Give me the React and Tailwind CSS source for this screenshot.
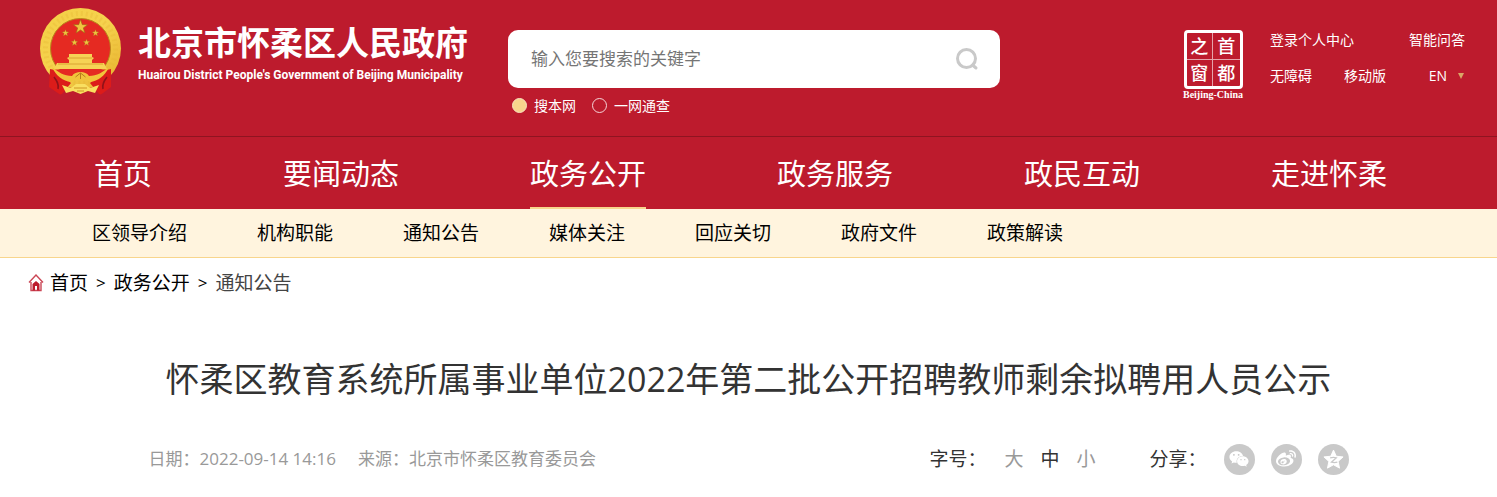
import React from 'react';
import { FaWeibo, FaWeixin } from 'react-icons/fa';

const NAV = ['首页', '要闻动态', '政务公开', '政务服务', '政民互动', '走进怀柔'];
const SUBNAV = ['区领导介绍', '机构职能', '通知公告', '媒体关注', '回应关切', '政府文件', '政策解读'];
const STAR = 'M0-10 2.4-3.2 9.5-3.1 3.8 1.2 5.9 8.1 0 4 -5.9 8.1 -3.8 1.2 -9.5-3.1 -2.4-3.2Z';

function Emblem() {
  return (
    <svg viewBox="0 0 82 88" className="h-[88px] w-[82px] shrink-0" aria-hidden="true">
      <defs>
        <linearGradient id="gold" x1="0" y1="0" x2="1" y2="1">
          <stop offset="0" stopColor="#f3cf45" />
          <stop offset="0.5" stopColor="#f6d24e" />
          <stop offset="1" stopColor="#e5ae2b" />
        </linearGradient>
      </defs>
      <circle cx="40.500" cy="40.500" r="40.500" fill="url(#gold)" />
      <circle cx="40.500" cy="40.500" r="35" fill="none" stroke="#e3b433" strokeWidth="5" strokeDasharray="2 3" opacity="0.3" />
      <circle cx="40.500" cy="40.500" r="30" fill="#e52a22" stroke="#b98a1b" strokeWidth="1" />
      <g fill="#f0c540" stroke="#9a6b13" strokeWidth="0.8">
        <path d={STAR} transform="translate(40.5 19) scale(.74)" />
        <path d={STAR} transform="translate(25.5 25) scale(.36)" />
        <path d={STAR} transform="translate(55.5 25) scale(.36)" />
        <path d={STAR} transform="translate(34.5 34.500) scale(.36)" />
        <path d={STAR} transform="translate(46.5 34.500) scale(.36)" />
      </g>
      <path d="M29 46h23v3l2 1-2 2v3h12l3 6H14l3-6h12v-3l-2-2 2-1z" fill="#f6d355" />
      <path d="M29 50h23M18 56h45" stroke="#d49b28" strokeWidth="0.8" />
      <path d="M15 61.500h51l-8 8H23z" fill="#e52a22" />
      <path d="M10 61l5 1 16 13-9 11-2 .5L9 79zM71 61l-5 1-16 13 9 11 2 .5L71 79z" fill="#dc1c1a" />
      <path d="M14 69c3 4 5 7 4 12M67 69c-3 4-5 7-4 12" stroke="#8f1219" strokeWidth="1.500" fill="none" />
      <path d="M12 59c6 5 12 9 20 9 2-3 5-4 8.500-4s6.500 1 8.500 4c8 0 14-4 20-9-4 9-11 14-19 15l-5-3-4.500 2-4.500-2-5 3c-8-1-15-6-19-15z" fill="#f1c43b" />
      <path d="M40.500 65l-5 4M40.500 65v6M40.500 65l5 4" stroke="#b77d1b" strokeWidth="1" />
      <path d="M22 77l9 3 5-4h9l5 4 9-3-4 8-7-2-7.500 3-7.500-3-7 2z" fill="#f9df60" />
      <path d="M34 80h13M37 83h7" stroke="#cf9425" strokeWidth="1" />
    </svg>
  );
}

function Seal() {
  return (
    <a href="#capital" className="flex w-[66px] shrink-0 flex-col items-center text-white">
      <span className="grid size-[59px] grid-cols-2 grid-rows-2 rounded-[4px] border-[3px] border-white text-center font-['Noto_Sans_CJK_SC',sans-serif] text-[18px] font-medium leading-[25px]">
        <span className="border-b border-r border-white/60">之</span>
        <span className="border-b border-white/60">首</span>
        <span className="border-r border-white/60">窗</span>
        <span>都</span>
      </span>
      <span className="whitespace-nowrap font-['Liberation_Serif',serif] text-[10px] font-bold leading-3">Beijing-China</span>
    </a>
  );
}

function QzoneIcon() {
  return (
    <svg viewBox="0 0 24 24" className="size-[23px]" aria-hidden="true">
      <path d="M12 2.200 14.900 8.600 22 9.300 16.800 14 18.300 21 12 17.500 5.700 21 7.200 14 2 9.300 9.100 8.600Z" fill="#fff" stroke="#fff" strokeLinejoin="round" />
      <path d="M8.500 10.200c2.500-.6 4.800-.5 6.500 0l-5.200 4.600c2.100.5 4.200.5 6.200 0" fill="none" stroke="#c9c9c9" strokeWidth="1.300" />
    </svg>
  );
}

export default function App() {
  return (
    <div lang="zh-CN" className="bg-white font-['Open_Sans','Noto_Sans_CJK_SC',sans-serif] text-black">
      <header className="bg-[#bd1b2d] text-white">
        <div className="flex h-[137px] items-start border-b border-[#8f1421] pl-10 pr-8">
          <a href="#home" className="flex shrink-0 items-start gap-4 pt-2">
            <Emblem />
            <span className="flex min-w-[340px] flex-col gap-1 pt-[13px]">
              <span className="whitespace-nowrap font-['Noto_Sans_CJK_SC',sans-serif] text-[33px] font-bold leading-[40px]">北京市怀柔区人民政府</span>
              <span className="whitespace-nowrap font-['Roboto',sans-serif] text-[12px] font-bold leading-5">Huairou District People's Government of Beijing Municipality</span>
            </span>
          </a>
          <form className="ml-[30px] w-[492px] shrink pt-[30px]" onSubmit={(e) => e.preventDefault()}>
            <div className="flex h-[58px] items-center rounded-[10px] bg-white pl-[23px] pr-5">
              <input type="search" aria-label="搜索" placeholder="输入您要搜索的关键字" className="min-w-0 flex-1 bg-transparent text-[17px] text-black outline-none placeholder:text-[#757575]" />
              <button type="submit" aria-label="搜索">
                <svg viewBox="0 0 26 26" className="size-[26px]" fill="none" stroke="#c9c9c9" strokeWidth="3" strokeLinecap="round">
                  <circle cx="12.500" cy="12.500" r="9" />
                  <path d="m18.500 19 3.500 3" />
                </svg>
              </button>
            </div>
            <div className="flex items-center gap-4 pl-1 pt-2 text-[14px] leading-[19px]">
              <label className="flex items-center gap-[7px]">
                <input type="radio" name="scope" defaultChecked className="size-[15px] appearance-none rounded-full border border-[#f8e3c0] checked:bg-[#f8d58c]" />
                搜本网
              </label>
              <label className="flex items-center gap-[7px]">
                <input type="radio" name="scope" className="size-[15px] appearance-none rounded-full border border-[#f5d5d8] checked:bg-[#f8d58c]" />
                一网通查
              </label>
            </div>
          </form>
          <div className="ml-auto flex gap-6 pt-[30px]">
            <Seal />
            <div className="flex w-[195px] flex-col gap-4 whitespace-nowrap text-[14px] leading-5">
              <div className="flex justify-between">
                <a href="#login">登录个人中心</a>
                <a href="#ask">智能问答</a>
              </div>
              <div className="flex">
                <a href="#a11y" className="mr-8">无障碍</a>
                <a href="#mobile">移动版</a>
                <a href="#en" className="ml-auto flex items-center gap-[10px]">
                  EN
                  <svg viewBox="0 0 8 8" className="size-[8px]" aria-hidden="true"><path d="M1 1h6L4 7z" fill="#d9a766" /></svg>
                </a>
              </div>
            </div>
          </div>
        </div>
        <nav className="flex h-[72px] gap-[131px] whitespace-nowrap px-[94px] text-[29px]">
          {NAV.map((t) => (
            <a key={t} href="#nav" className={t === '政务公开' ? 'flex items-center border-b-2 border-[#f8d58c] pt-1' : 'flex items-center border-b-2 border-transparent pt-1'}>{t}</a>
          ))}
        </nav>
      </header>
      <nav className="flex h-[49px] items-center gap-[70px] whitespace-nowrap border-b border-[#f8d58c] bg-[#fff4de] px-[92px] text-[19px]">
        {SUBNAV.map((t) => <a key={t} href="#sub">{t}</a>)}
      </nav>
      <nav aria-label="位置" className="flex items-center gap-2 px-7 pt-3 text-[19px] leading-[26px]">
        <a href="#home" className="flex items-center gap-[6px]">
          <svg viewBox="0 0 16 18" className="h-[18px] w-4" fill="none" aria-hidden="true">
            <path d="M1 8.500 8 1l7 7.500M3 8v8.500h10V8" stroke="#cb4655" strokeWidth="1.400" />
            <path d="M4.500 16.500V10L8 7l3.500 3v6.500H9V12H7v4.500z" fill="#bd1b2d" />
          </svg>
          首页
        </a>
        <span className="text-[17px]">&gt;</span>
        <a href="#open">政务公开</a>
        <span className="text-[17px]">&gt;</span>
        <a href="#notice" className="text-[#444]">通知公告</a>
      </nav>
      <main className="mx-auto max-w-[1200px] pb-5">
        <h1 className="pt-[57px] text-center text-[34px] leading-[52px] text-[#333] min-[1200px]:whitespace-nowrap">怀柔区教育系统所属事业单位2022年第二批公开招聘教师剩余拟聘用人员公示</h1>
        <div className="flex flex-wrap items-center pt-[38px]">
          <div className="flex gap-[22px] text-[17px] leading-8 text-[#999]">
            <span>日期：2022-09-14 14:16</span>
            <span>来源：北京市怀柔区教育委员会</span>
          </div>
          <div className="ml-auto flex items-center text-[19px] leading-8 text-[#333]">
            <span className="mr-[18px]">字号：</span>
            <div className="flex gap-[17px] text-[#999]">
              <button type="button">大</button>
              <button type="button" className="text-[#333]">中</button>
              <button type="button">小</button>
            </div>
            <span className="ml-[54px]">分享：</span>
            <div className="ml-[17px] flex gap-4">
              <button type="button" aria-label="微信" className="flex size-[31px] items-center justify-center rounded-full bg-[#c9c9c9] text-white"><FaWeixin className="size-[20px]" /></button>
              <button type="button" aria-label="微博" className="flex size-[31px] items-center justify-center rounded-full bg-[#c9c9c9] text-white"><FaWeibo className="size-[20px]" /></button>
              <button type="button" aria-label="QQ空间" className="flex size-[31px] items-center justify-center rounded-full bg-[#c9c9c9]"><QzoneIcon /></button>
            </div>
          </div>
        </div>
      </main>
    </div>
  );
}
